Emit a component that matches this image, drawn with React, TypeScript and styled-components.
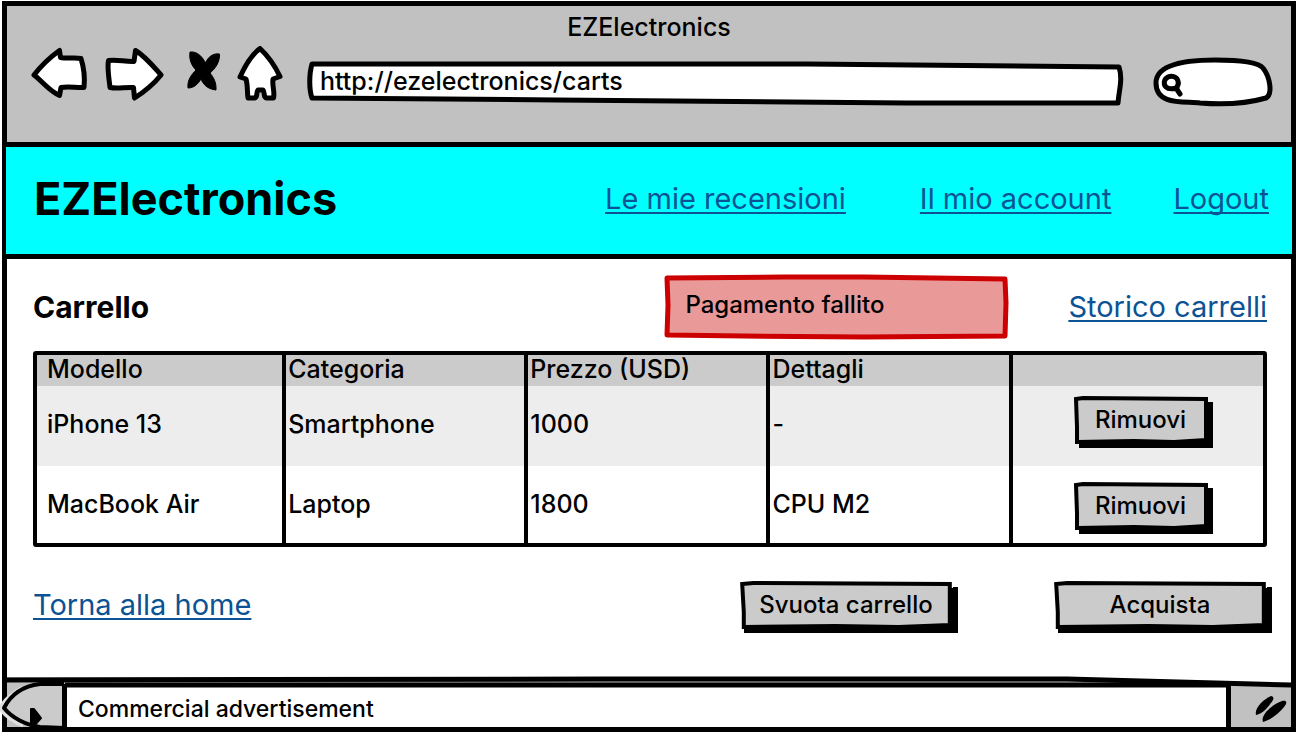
import React from "react";
import styled, { createGlobalStyle } from "styled-components";

const GlobalStyle = createGlobalStyle`
  *, *::before, *::after { box-sizing: border-box; }
  body {
    margin: 0;
    background: #fff;
    color: #000;
    font-family: Inter, "Liberation Sans", sans-serif;
    font-size: 24px;
    font-weight: 500;
    line-height: 28px;
  }
  button, input { font: inherit; color: inherit; }
`;

const Frame = styled.div`
  display: flex;
  flex-direction: column;
  min-height: 100vh;
  padding: 1px 2px 2px;
`;

const Window = styled.div`
  flex: 1;
  display: flex;
  flex-direction: column;
  border: 5px solid #000;
`;

const Chrome = styled.div`
  padding: 7px 17px 36px 23px;
  background: #c1c1c1;
  font-size: 25px;
`;

const WindowTitle = styled.p`
  margin: 0 0 5px;
  padding-right: 6px;
  text-align: center;
`;

const Toolbar = styled.div`
  display: flex;
  align-items: flex-end;
`;

const NavButtons = styled.div`
  display: flex;
  gap: 14px;
  margin-right: 23px;
`;

const IconButton = styled.button`
  display: flex;
  padding: 0;
  border: 0;
  background: none;
`;

const Field = styled.div<{ $grow?: boolean }>`
  position: relative;
  isolation: isolate;
  display: flex;
  flex: ${(p) => (p.$grow ? "1" : "0 0 122px")};
  height: ${(p) => (p.$grow ? "44px" : "48px")};
  margin-right: ${(p) => (p.$grow ? "28px" : "0")};
  padding: ${(p) => (p.$grow ? "0 12px 6px 13px" : "0 12px 0 38px")};
`;

const TextInput = styled.input`
  width: 100%;
  min-width: 0;
  padding: 0;
  border: 0;
  outline: 0;
  background: none;
`;

const Outline = styled.svg`
  position: absolute;
  inset: 0;
  z-index: -1;
  width: 100%;
  height: 100%;
  overflow: visible;
  path { vector-effect: non-scaling-stroke; }
`;

const SiteHeader = styled.header`
  display: flex;
  align-items: center;
  justify-content: space-between;
  min-height: 117px;
  margin: 0 -5px;
  padding: 0 23px 3px 28px;
  border: 4px solid #000;
  border-top-width: 5px;
  border-bottom-width: 5px;
  border-radius: 3px;
  background: #00ffff;
`;

const Brand = styled.h1`
  margin: 0;
  font-size: 45px;
  font-weight: 700;
  line-height: 56px;
`;

const SiteNav = styled.nav`
  display: flex;
`;

const TextLink = styled.a<{ $gap?: number }>`
  margin-left: ${(p) => p.$gap ?? 0}px;
  color: #0b5394;
  font-size: 29px;
  font-weight: 400;
  line-height: 32px;
  text-decoration: underline;
  text-decoration-thickness: 2px;
  text-decoration-skip-ink: none;
  text-underline-offset: 3px;
`;

const Main = styled.main`
  flex: 1;
  padding: 16px 24px 44px 26px;
`;

const Row = styled.div`
  display: flex;
  align-items: center;
`;

const Heading = styled.h2`
  flex: 1;
  margin: 0;
  font-size: 30px;
  font-weight: 700;
  line-height: 36px;
`;

const Alert = styled.div`
  position: relative;
  isolation: isolate;
  flex: 0 0 344px;
  margin-right: 60px;
  padding: 16px 21px 20px;
`;

const CartTable = styled.table`
  width: 100%;
  margin: 12px 0 35px;
  table-layout: fixed;
  border: 4px solid #000;
  border-radius: 3px;
  border-spacing: 0;
  font-size: 25px;
  text-align: left;

  th, td { padding: 24px 0 0 2px; font-weight: 500; vertical-align: top; }
  thead th { padding-top: 0; }
  tr > :first-child { padding-left: 10px; }
  tr > :not(:first-child) { border-left: 4px solid #000; }
  thead tr { height: 31px; background: #cbcbcb; }
  tbody tr { height: 80px; }
  tbody tr:nth-child(odd) { background: #ededed; }
  tbody tr:last-child { height: 77px; }
`;

const ActionCell = styled.td<{ $top: number }>`
  && { padding: ${(p) => p.$top}px 0 0 61px; }
`;

const SketchButton = styled.button<{ $width: number }>`
  position: relative;
  isolation: isolate;
  display: block;
  width: ${(p) => p.$width}px;
  height: 46px;
  padding: 0;
  border: 0;
  background: none;
  box-shadow: 5px 5px 0 #000;
  font-size: 24px;
  text-align: center;
`;

const Actions = styled.div`
  display: flex;
  gap: 100px;
  margin-left: auto;
`;

const Footer = styled.footer`
  position: relative;
  isolation: isolate;
  display: flex;
  height: 50px;
  padding: 7px 60px 0 55px;
  background: #c1c1c1;
  font-size: 23px;
`;

const AdBar = styled.p`
  flex: 1;
  margin: 0;
  padding: 11px;
  border: solid #000;
  border-width: 0 5px;
  background: #fff;
`;

const FooterArt = styled.svg<{ $side: "left" | "right" }>`
  position: absolute;
  top: 0;
  ${(p) => (p.$side === "left" ? "left: -7px;" : "right: 0;")}
  overflow: visible;
`;

const FooterRules = styled(Outline)`
  z-index: 0;
`;

const stroke = {
  stroke: "#000",
  strokeWidth: 5,
  strokeLinejoin: "round" as const,
  strokeLinecap: "round" as const,
};

function Button({ width, children }: { width: number; children: React.ReactNode }) {
  return (
    <SketchButton type="button" $width={width}>
      <Outline viewBox="0 0 134 46" preserveAspectRatio="none" aria-hidden="true">
        <path d="M2 2 L9 1 L132 2 L132 43 L100 45 L60 44 L3 45 L3 30 Z" fill="#cbcbcb" stroke="#000" strokeWidth="4" />
        <path d="M133 6 V45 H4" fill="none" stroke="#000" strokeWidth="4" />
      </Outline>
      {children}
    </SketchButton>
  );
}

const products = [
  { model: "iPhone 13", category: "Smartphone", price: "1000", details: "-", top: 11 },
  { model: "MacBook Air", category: "Laptop", price: "1800", details: "CPU M2", top: 17 },
];

export default function App() {
  return (
    <>
      <GlobalStyle />
      <Frame>
        <Window>
          <Chrome>
            <WindowTitle>EZElectronics</WindowTitle>
            <Toolbar>
              <NavButtons>
                <IconButton type="button" aria-label="Indietro">
                  <svg width="60" height="60" viewBox="30 46 60 60">
                    <path {...stroke} fill="#fff" d="M34 75 C41 66 49 58 59.500 50.500 L60.500 57.500 C68 59 74 57 81 58.500 C84 68 85 78 84 87.500 C76 88 69 86 61 87.500 L59.500 95.500 C49 91 42 81 34 75 Z" />
                  </svg>
                </IconButton>
                <IconButton type="button" aria-label="Avanti">
                  <svg width="60" height="60" viewBox="104 46 60 60">
                    <path {...stroke} fill="#fff" d="M108.500 60.500 C117 59 125 62 134 61.500 L135.500 50.500 C145 56 153 66 161 75 C153 85 144 92 134.500 98 L133.500 87.500 C125 87 118 89 110 87.500 C109 78 107 68 108.500 60.500 Z" />
                  </svg>
                </IconButton>
                <IconButton type="button" aria-label="Interrompi">
                  <svg width="44" height="60" viewBox="178 46 44 60">
                    <path stroke="#000" strokeLinejoin="round" d="M190 52 C198 51 203 58 205.500 63 C208 57 213 53 219.500 54 C220 62 215 69 210 73 C214 78 216.500 83 216 90 C207 89 203 84 201 79 C198 84 194 88 188 88 C187 80 192 74 196 70 C191 65 189 59 190 52 Z" />
                  </svg>
                </IconButton>
                <IconButton type="button" aria-label="Home">
                  <svg width="48" height="60" viewBox="236 46 48 60">
                    <path {...stroke} fill="#fff" d="M260 48.500 C268 56 275 66 280 76.500 L273 79 C272 86 275 92 273.500 98 L266 98 C263 96 265 92 263 90 L258 90 C256 92 258 96 255 98 L248 98 C247 92 248 86 246 79 L240 77 C245 66 251 55 260 48.500 Z" />
                  </svg>
                </IconButton>
              </NavButtons>
              <Field $grow>
                <Outline viewBox="0 0 817 44" preserveAspectRatio="none" aria-hidden="true">
                  <path {...stroke} fill="#fff" d="M5 2 L300 2 L500 2 L812 5 C816 17 812 28 811 41 L600 41 L250 38 L5 36 C2 28 2 12 5 2 Z" />
                </Outline>
                <TextInput aria-label="Indirizzo" defaultValue="http://ezelectronics/carts" />
              </Field>
              <Field>
                <Outline viewBox="1152 58 122 48" preserveAspectRatio="none" aria-hidden="true">
                  <path {...stroke} fill="#fff" d="M1156 83 C1156 66 1180 60 1215 60 C1240 60 1258 62 1263 68 C1270 77 1273 94 1266 98 C1245 104 1225 105 1200 103 C1185 101 1156 106 1156 83 Z" />
                  <path {...stroke} fill="none" d="M1177 88 C1173 89 1168 89 1166 87 C1163 84 1164 79 1168 77 C1172 75 1177 77 1178 81 C1179 84 1178 86 1176 88 L1180 94" />
                </Outline>
                <TextInput type="search" aria-label="Cerca" />
              </Field>
            </Toolbar>
          </Chrome>

          <SiteHeader>
            <Brand>EZElectronics</Brand>
            <SiteNav>
              <TextLink href="#recensioni">Le mie recensioni</TextLink>
              <TextLink href="#account" $gap={74}>Il mio account</TextLink>
              <TextLink href="#logout" $gap={62}>Logout</TextLink>
            </SiteNav>
          </SiteHeader>

          <Main>
            <Row>
              <Heading>Carrello</Heading>
              <Alert role="alert">
                <Outline viewBox="0 0 344 64" preserveAspectRatio="none" aria-hidden="true">
                  <path d="M3 3 L120 2 L200 2 L341 4 L342 28 L341 61 L200 62 L80 61 L3 60 L4 30 Z" fill="#ea9999" stroke="#cc0000" strokeWidth="5" strokeLinejoin="round" />
                </Outline>
                Pagamento fallito
              </Alert>
              <TextLink href="#storico">Storico carrelli</TextLink>
            </Row>

            <CartTable>
              <colgroup>
                <col style={{ width: "20%" }} />
                <col style={{ width: "19.75%" }} />
                <col style={{ width: "19.75%" }} />
                <col style={{ width: "19.75%" }} />
                <col />
              </colgroup>
              <thead>
                <tr>
                  <th>Modello</th>
                  <th>Categoria</th>
                  <th>Prezzo (USD)</th>
                  <th>Dettagli</th>
                  <ActionCell $top={0} />
                </tr>
              </thead>
              <tbody>
                {products.map((p) => (
                  <tr key={p.model}>
                    <td>{p.model}</td>
                    <td>{p.category}</td>
                    <td>{p.price}</td>
                    <td>{p.details}</td>
                    <ActionCell $top={p.top}>
                      <Button width={134}>Rimuovi</Button>
                    </ActionCell>
                  </tr>
                ))}
              </tbody>
            </CartTable>

            <Row>
              <TextLink href="#home">Torna alla home</TextLink>
              <Actions>
                <Button width={214}>Svuota carrello</Button>
                <Button width={214}>Acquista</Button>
              </Actions>
            </Row>
          </Main>

          <Footer>
            <AdBar>Commercial advertisement</AdBar>
            <FooterRules viewBox="0 0 1284 50" preserveAspectRatio="none" aria-hidden="true">
              <path d="M0 0 V-2 H1284 V7 L1060 1 Z" fill="#fff" />
              <path d="M0 3 L600 2 L1060 2 L1284 8" fill="none" stroke="#000" strokeWidth="5" />
              <path d="M58 8 L500 8 L800 8 L1224 8" fill="none" stroke="#000" strokeWidth="5" />
            </FooterRules>
            <FooterArt $side="left" width="66" height="50" viewBox="0 677 66 50" aria-hidden="true">
              <path d="M24 690 C13 696 7 701 3 708 C8 715 14 719 24 723" fill="none" stroke="#e0e0e0" strokeWidth="9" strokeLinejoin="round" />
              <path d="M64 684 L40 684 C24 686 11 694 4 708 C12 718 26 725 40 727 L64 728" fill="#cbcbcb" stroke="#000" strokeWidth="4" strokeLinejoin="round" />
              <path d="M64 686 V727" stroke="#000" strokeWidth="4" />
              <path d="M31 709 L34 709 L41 718 L33 727 L31 726 Z" stroke="#000" strokeWidth="2" strokeLinejoin="round" />
            </FooterArt>
            <FooterArt $side="right" width="40" height="50" viewBox="1251 677 40 50" aria-hidden="true">
              <path d="M1256 715 C1254 708 1264 699 1271 696 C1273 696 1274 698 1273 700 C1269 706 1264 713 1256 715 Z" />
              <path d="M1263 722 C1260 715 1273 704 1282 701 C1285 700 1287 701 1286 704 C1282 711 1271 720 1263 722 Z" />
            </FooterArt>
          </Footer>
        </Window>
      </Frame>
    </>
  );
}
